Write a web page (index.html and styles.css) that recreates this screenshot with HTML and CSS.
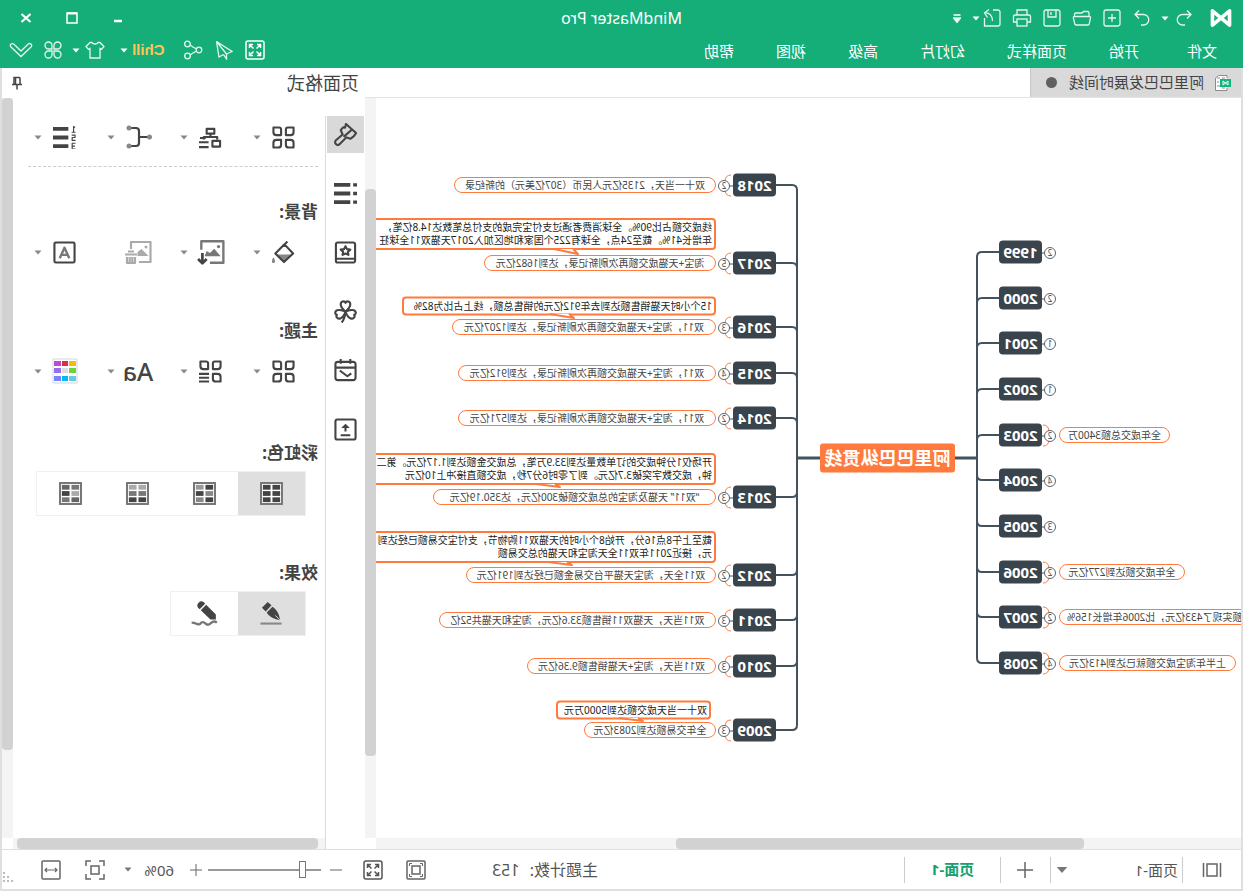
FILE: index.html
```html
<!DOCTYPE html>
<html lang="zh-CN">
<head>
<meta charset="utf-8">
<title>MindMaster Pro</title>
<link rel="stylesheet" href="styles.css">
</head>
<body>
<svg class="sprite" aria-hidden="true">
  <symbol id="caret" viewBox="0 0 8 5"><path d="M0.5 0.5h7L4 4.5z" fill="currentColor"/></symbol>
  <symbol id="grid4" viewBox="0 0 24 24"><g fill="none" stroke="currentColor" stroke-width="2.200"><path d="M1.5 1.5h6a2 2 0 0 1 2 2v6h-5a3 3 0 0 1-3-3zM22.500 1.500h-6a2 2 0 0 0-2 2v6h5a3 3 0 0 0 3-3zM1.500 22.500h5a3 3 0 0 0 3-3v-5h-5a3 3 0 0 0-3 3zM22.500 22.500h-5a3 3 0 0 1-3-3v-5h5a3 3 0 0 1 3 3z"/></g></symbol>
  <symbol id="expand" viewBox="0 0 20 20"><g fill="none" stroke="currentColor" stroke-width="1.500"><rect x="1" y="1" width="18" height="18" rx="2"/><path d="M4.500 8V4.500H8M12 4.500h3.500V8M15.500 12v3.500H12M8 15.500H4.500V12M4.500 4.500l4 4M15.500 4.500l-4 4M15.500 15.500l-4-4M4.500 15.500l4-4"/></g></symbol>
</svg>
<div class="app">
  <header class="header">
    <div class="titlebar">
      <div class="quick">
        <svg class="logo" viewBox="0 0 24 20"><path d="M2.500 2v16L21.500 2v16z" fill="none" stroke="#fff" stroke-width="4" stroke-linejoin="round"/></svg>
        <button class="tool" aria-label="撤销"><svg class="i20" viewBox="0 0 20 20"><path d="M7 2.500L3 6.500l4 4M3 6.500h8.500a5 5 0 0 1 0 10.500H9"/></svg></button>
        <button class="drop" aria-label="撤销历史"><svg class="caret"><use href="#caret"/></svg></button>
        <button class="tool redo" aria-label="重做"><svg class="i20" viewBox="0 0 20 20"><path d="M13 2.500l4 4-4 4M17 6.500H8.500a5 5 0 0 0 0 10.500H11"/></svg></button>
        <button class="tool" aria-label="新建"><svg class="i20" viewBox="0 0 20 20"><rect x="2" y="2" width="16" height="16" rx="2"/><path d="M10 6v8M6 10h8"/></svg></button>
        <button class="tool" aria-label="打开"><svg class="i20" viewBox="0 0 20 20"><path d="M3 8.500V5a1.500 1.500 0 0 1 1.500-1.500h4L10 5h6a1.500 1.500 0 0 1 1.500 1.500v2M2.500 8.500h15.200a1 1 0 0 1 1 1.200l-1.400 6a1.500 1.500 0 0 1-1.500 1.300H4.200a1.500 1.500 0 0 1-1.500-1.300l-1.200-6a1 1 0 0 1 1-1.200z"/></svg></button>
        <button class="tool" aria-label="保存"><svg class="i20" viewBox="0 0 20 20"><rect x="2" y="2" width="16" height="16" rx="2"/><path d="M6 2v7h8V2M11 4v3"/></svg></button>
        <button class="tool" aria-label="打印"><svg class="i20" viewBox="0 0 20 20"><path d="M5 7V2h10v5M5 14H1.500V8.500A1.500 1.500 0 0 1 3 7h14a1.500 1.500 0 0 1 1.500 1.500V14H15"/><rect x="5" y="11" width="10" height="7"/></svg></button>
        <button class="tool" aria-label="导出"><svg class="i20" viewBox="0 0 20 20"><path d="M9 2H4a2 2 0 0 0-2 2v12a2 2 0 0 0 2 2h13.500V10M13 1.500L17.500 5l-3 4.500M17.500 5c-5-.5-8 2.500-8 8"/></svg></button>
        <button class="drop near" aria-label="导出选项"><svg class="caret"><use href="#caret"/></svg></button>
        <button class="drop more" aria-label="自定义"><svg class="morei" viewBox="0 0 8 9"><path d="M0.500 1h7" stroke="#fff" stroke-width="1.500"/><path d="M0.500 4h7L4 8.500z" fill="#fff"/></svg></button>
      </div>
      <h1 class="title">MindMaster Pro</h1>
      <div class="window">
        <button aria-label="最小化"><svg viewBox="0 0 12 12"><path d="M2 9h8" stroke-width="2.500"/></svg></button>
        <button aria-label="最大化"><svg viewBox="0 0 12 12"><rect x="1" y="1" width="10" height="10" stroke-width="1.500"/><path d="M1 1.500h10" stroke-width="2"/></svg></button>
        <button aria-label="关闭"><svg viewBox="0 0 12 12"><path d="M1.500 2l9 8M10.500 2l-9 8" stroke-width="2.200"/></svg></button>
      </div>
    </div>
    <div class="menubar">
      <nav class="menu">
        <a class="file" href="#">文件</a><a href="#">开始</a><a href="#">页面样式</a><a href="#">幻灯片</a><a href="#">高级</a><a href="#">视图</a><a href="#">帮助</a>
      </nav>
      <div class="tools">
        <button class="tool" aria-label="全屏"><svg class="i20"><use href="#expand"/></svg></button>
        <button class="tool" aria-label="发送"><svg class="i20" viewBox="0 0 20 20"><path d="M17.500 1.500L2 11.500l5.500 2.500zM17.500 1.500L15 17l-4.500-2.500M17.500 1.500L7.500 14v5l3-4.500"/></svg></button>
        <button class="tool" aria-label="分享"><svg class="i20" viewBox="0 0 20 20"><circle cx="4" cy="10" r="2.800"/><circle cx="15.500" cy="4" r="2.800"/><circle cx="15.500" cy="16" r="2.800"/><path d="M6.500 9L10 7l3-2M6.500 11l3.500 2 3 2"/></svg></button>
        <button class="user">Chill<svg class="caret"><use href="#caret"/></svg></button>
        <button class="tool shirt" aria-label="皮肤"><svg class="i20" viewBox="0 0 20 20"><path d="M7 2.500c1 2 5 2 6 0h2l4 4-2.500 3L15 8.500V18H5V8.500L3.500 9.500 1 6.500l4-4z"/></svg></button>
        <button class="drop" aria-label="皮肤选项"><svg class="caret"><use href="#caret"/></svg></button>
        <button class="tool apps" aria-label="应用"><svg class="i20" viewBox="0 0 20 20"><path d="M9 9H5.500A3.500 3.500 0 1 1 9 5.500zM11 9V5.500A3.500 3.500 0 1 1 14.500 9zM9 11v3.500A3.500 3.500 0 1 1 5.500 11zM11 11h3.500a3.500 3.500 0 1 1-3.500 3.500z"/></svg></button>
        <button class="tool" aria-label="收起"><svg class="fold" viewBox="0 0 24 16"><path d="M3.500 1.500a2 2 0 0 0-1.500 3.500l10 9.500 10-9.500a2 2 0 0 0-3-2.800L12 9 5 2.200a2 2 0 0 0-1.500-.7z"/></svg></button>
      </div>
    </div>
  </header>

  <main class="workspace">
    <section class="document">
      <div class="tabs">
        <button class="tab">
          <svg class="docicon" viewBox="0 0 18 18"><path d="M5 4V1.500h8.500L16.500 4v12.500H5V14" fill="#fff" stroke="#8b8b8b"/><path d="M7 4h3M12 4h3M13 8h2M7 14h3M12 12h3" stroke="#8b8b8b"/><rect x="1" y="5" width="11" height="8" fill="#12b67d"/><path d="M4 11V7l5 4V7z" fill="none" stroke="#fff"/></svg>
          <span>阿里巴巴发展时间线</span><i class="dot"></i>
        </button>
      </div>
      <div class="canvas">
        <svg class="links" id="links"></svg>
        <div id="nodes"></div>
        <svg class="links" id="tails"></svg>
      </div>
      <div class="vscroll"><i></i></div>
      <div class="hscroll"><i></i></div>
    </section>

    <aside class="panel">
      <div class="panel-head"><h2>页面格式</h2><button class="pin" aria-label="固定"><svg viewBox="0 0 12 14"><path d="M3 1.500h6V8M3 1.500V8M1 8.500h10M6 9v4.500" fill="none" stroke="#444" stroke-width="1.500"/><path d="M7.500 2v6" stroke="#444" stroke-width="1.500"/></svg></button></div>
      <div class="rail">
        <button class="on" aria-label="格式"><svg viewBox="0 0 24 24"><path d="M11.500 1L1 10.500 3.500 14l3.500 2.500 4-1.500 7 7a2.800 2.800 0 0 0 4-4l-7-6 2-4.500-2.500-3-2 .5zM5.500 7l8.500 7.500"/></svg></button>
        <button aria-label="大纲"><svg viewBox="0 0 24 24"><path d="M7 3h17M7 12h17M7 21h17" stroke-width="4"/><path d="M0 3h4M0 12h4M0 21h4" stroke-width="3.500"/></svg></button>
        <button aria-label="图标"><svg viewBox="0 0 24 24"><rect x="2" y="1.500" width="20" height="21" rx="2"/><path d="M2 18.500h20M12 5.500l1.500 3 3.500.5-2.500 2.300.6 3.200-3.100-1.500-3.100 1.500.6-3.200L7 9l3.500-.5z"/></svg></button>
        <button aria-label="剪贴画"><svg viewBox="0 0 24 24"><path d="M12 12C8 9 7 7 7 4.500c0-3.500 4-4 5-1.500 1-2.500 5-2 5 1.500C17 7 16 9 12 12zM12 12c-3-1-5-2-7.500-1.500-4 .5-4 4.500-1.500 5-1.500 2 1 5 4 3.500 2.500-1 4-4 5-7zM12 12c3-1 5-2 7.500-1.500 4 .5 4 4.500 1.500 5 1.500 2-1 5-4 3.500-2.500-1-4-4-5-7zM12 12c.3 5 1.500 8.500 4 11.500"/></svg></button>
        <button aria-label="任务"><svg viewBox="0 0 24 24"><rect x="1.500" y="3" width="21" height="19" rx="2.500"/><path d="M1.500 9h21M7 0v5M17 0v5M18 12l-8 6-4-3"/></svg></button>
        <button aria-label="导出"><svg viewBox="0 0 24 24"><rect x="1.500" y="1.500" width="21" height="21" rx="2"/><path d="M12 14V8M7 18h10"/><path d="M7.500 10.500L12 6l4.500 4.500z" fill="currentColor" stroke="none"/></svg></button>
      </div>
      <div class="format">
        <section class="row first">
          <button aria-label="布局"><svg><use href="#grid4"/></svg></button><button class="drop" aria-label="布局选项"><svg class="caret"><use href="#caret"/></svg></button>
          <button aria-label="结构"><svg viewBox="0 0 24 24"><path d="M8 3h8v5H8zM12 8v3M5 14v-2.500h14V14M2 15.500h8v6H2z"/><path d="M14 17h10M14 22h10M17 12.500h6"/></svg></button><button class="drop" aria-label="结构选项"><svg class="caret"><use href="#caret"/></svg></button>
          <button aria-label="连接线"><svg viewBox="-2 0 28 24" class="wide"><path d="M2 12h8M20 3h-6a3 3 0 0 0-3 3v12a3 3 0 0 0 3 3h6"/><g fill="#888" stroke="none"><circle cx="0.500" cy="12" r="2.500"/><circle cx="21" cy="3" r="2.500"/><circle cx="21" cy="21" r="2.500"/></g></svg></button><button class="drop" aria-label="连接线选项"><svg class="caret"><use href="#caret"/></svg></button>
          <button aria-label="编号"><svg viewBox="0 0 24 24"><path d="M8 3h16M8 12h16M8 21h16" stroke-width="4"/><path d="M1 1.500l1.500-1V6.500M0.500 6.500h4M4.500 9.500H1V12h3v3H.5M.5 18h3.500v6H.5M1 21h3" stroke-width="1.200"/></svg></button><button class="drop" aria-label="编号选项"><svg class="caret"><use href="#caret"/></svg></button>
        </section>
        <section>
          <h3 class="near">背景:</h3>
          <div class="row">
            <button aria-label="背景颜色"><svg viewBox="0 0 24 24"><path d="M4 14h16l-8 8z" fill="#888" stroke="none"/><path d="M11 3.500l9.500 9.500-9 9L2 13zM8 .5l4.500 5"/><path d="M22.500 17c2.500 3.500 2 6 0 6s-2.500-2.500 0-6z" fill="#888" stroke="none"/></svg></button><button class="drop" aria-label="背景颜色选项"><svg class="caret"><use href="#caret"/></svg></button>
            <button aria-label="插入背景图"><svg viewBox="0 0 26 24" class="wide"><path d="M22 10V2H1.500v20H14" stroke="#777"/><path d="M4 16l6-7 4 4 3-2 2 5z" fill="#777" stroke="none"/><circle cx="6" cy="7" r="1.500" fill="#777" stroke="none"/><path d="M21 13v9M17 18.500l4 4 4-4" stroke-width="2.500"/></svg></button><button class="drop" aria-label="背景图选项"><svg class="caret"><use href="#caret"/></svg></button>
            <button aria-label="删除背景图" disabled><svg viewBox="0 0 28 24" class="wide faint"><path d="M21 9V2H1.500v20H13"/><path d="M3.500 16l7-7 4 3v4z" fill="currentColor" stroke="none"/><circle cx="6" cy="7" r="1.500" fill="currentColor" stroke="none"/><path d="M15 14.500h12M18 11.500h6M17 17v6h8v-6M19.700 17v5M22.300 17v5"/></svg></button><span></span>
            <button aria-label="水印"><svg viewBox="0 0 24 24"><rect x="1.500" y="1.500" width="21" height="21" rx="1.500"/><path d="M7 18l5-11 5 11M9 14.500h6" stroke="#777" stroke-width="2.500"/></svg></button><button class="drop" aria-label="水印选项"><svg class="caret"><use href="#caret"/></svg></button>
          </div>
        </section>
        <section>
          <h3 class="theme">主题:</h3>
          <div class="row">
            <button aria-label="主题"><svg><use href="#grid4"/></svg></button><button class="drop" aria-label="主题选项"><svg class="caret"><use href="#caret"/></svg></button>
            <button aria-label="主题样式"><svg viewBox="0 0 24 24"><path d="M1.500 1.500h6a2 2 0 0 1 2 2v6h-5a3 3 0 0 1-3-3zM22.500 1.500h-6a2 2 0 0 0-2 2v6h5a3 3 0 0 0 3-3zM1.500 22.500h5a3 3 0 0 0 3-3v-5h-5a3 3 0 0 0-3 3zM13.500 14.500H24M13.500 18.500H24M13.500 22.500H24"/></svg></button><button class="drop" aria-label="主题样式选项"><svg class="caret"><use href="#caret"/></svg></button>
            <button class="font" aria-label="字体">Aa</button><button class="drop" aria-label="字体选项"><svg class="caret"><use href="#caret"/></svg></button>
            <button aria-label="颜色"><svg viewBox="0 0 26 26" class="wide"><rect x="1" y="1" width="24" height="24" fill="#fff" stroke="#cdd6e8" stroke-width="1"/><g stroke="none"><path d="M2 3h7v5H2z" fill="#f0c000"/><path d="M10 3h6v5h-6z" fill="#dc2d50"/><path d="M17 3h7v5h-7z" fill="#c04bd0"/><path d="M2 10h7v5H2z" fill="#6fd040"/><path d="M10 10h6v5h-6z" fill="#dcdcdc"/><path d="M17 10h7v5h-7z" fill="#9470f0"/><path d="M2 18h7v5H2z" fill="#65cce0"/><path d="M10 18h6v5h-6z" fill="#00b8f5"/><path d="M17 18h7v5h-7z" fill="#7685ff"/></g></svg></button><button class="drop" aria-label="颜色选项"><svg class="caret"><use href="#caret"/></svg></button>
          </div>
        </section>
        <section>
          <h3>彩虹色:</h3>
          <div class="segment" id="rainbow"></div>
        </section>
        <section>
          <h3>效果:</h3>
          <div class="segment">
            <button class="on" aria-label="钢笔"><svg viewBox="0 0 24 24"><path d="M1.500 22.500h22" stroke="#888"/><path d="M12 3.500l4-3.500 6 6-4 4zM11 5l6 6c-3 5-8 7-14 8 .5-5 3-11 8-14z" fill="currentColor" stroke="none"/><path d="M3 19l5-5" stroke="#ddd" stroke-width="1"/></svg></button>
            <button aria-label="铅笔"><svg viewBox="0 0 26 24" class="wide"><path d="M1 20c2-1.500 3.500-1.500 5 0s3.500 3 5.500 1 3.500-2 5 0 3.500-1 8-1" stroke="#777"/><path d="M2 17v-4.500L11 3.500l5 5L7 17zM12 2.500c2-2.500 4-3 6-1s1.500 4-1 6z" fill="currentColor" stroke="none"/></svg></button>
          </div>
        </section>
      </div>
      <div class="vscroll"><i></i></div>
      <div class="hscroll"><i></i></div>
    </aside>
  </main>

  <footer class="status">
    <button class="pages" aria-label="页面列表"><svg viewBox="0 0 20 16"><path d="M5 2h10v12H5zM1.500 1v14M18.500 1v14"/></svg></button>
    <label class="pageselect"><select aria-label="当前页面"><option>页面-1</option></select><svg class="caret big"><use href="#caret"/></svg></label>
    <button class="add" aria-label="添加页面"><svg viewBox="0 0 16 16"><path d="M8 0v16M0 8h16"/></svg></button>
    <button class="pagetab">页面-1</button>
    <p class="count">主题计数: <span>153</span></p>
    <button aria-label="适合页面"><svg viewBox="0 0 20 20"><rect x="1" y="1" width="18" height="18" rx="1"/><rect x="6" y="6" width="8" height="8"/><path d="M3.500 6V3.500H6M14 3.500h2.500V6M16.500 14v2.500H14M6 16.500H3.500V14" stroke-width="1"/></svg></button>
    <button class="full" aria-label="全屏"><svg><use href="#expand"/></svg></button>
    <button class="step minus" aria-label="缩小"><svg viewBox="0 0 14 14"><path d="M1 7h12"/></svg></button>
    <input class="zoom" type="range" min="0" max="100" value="14" aria-label="缩放">
    <button class="step plus" aria-label="放大"><svg viewBox="0 0 14 14"><path d="M1 7h12M7 1v12"/></svg></button>
    <button class="percent">60%<svg class="caret"><use href="#caret"/></svg></button>
    <button aria-label="居中"><svg viewBox="0 0 20 20"><path d="M1 6V1h5M14 1h5v5M19 14v5h-5M6 19H1v-5M6 6h8v8H6z"/></svg></button>
    <button aria-label="适合宽度"><svg viewBox="0 0 20 20"><rect x="1" y="1" width="18" height="18" rx="1"/><path d="M4 10h12M6 8l-2 2 2 2M14 8l2 2-2 2" stroke-width="1.200"/></svg></button>
    <svg class="grip" viewBox="0 0 12 12"><path d="M10 1h2M10 5h2M6 5h2M10 9h2M6 9h2M2 9h2" stroke="#bbb" stroke-width="2"/></svg>
  </footer>
</div>
<script src="map.js"></script>
</body>
</html>
```
FILE: styles.css
```css
* { box-sizing: border-box; }
body {
  margin: 0;
  color: #444;
  font: 15px/20px "Noto Sans", "Noto Sans CJK SC", sans-serif;
}
button, select, input { font: inherit; color: inherit; }
button {
  display: flex;
  align-items: center;
  justify-content: center;
  padding: 0;
  border: 0;
  background: none;
}
h1, h2, h3, p { margin: 0; font-weight: 400; }
svg { display: block; flex: none; }
.sprite { position: absolute; width: 0; height: 0; }
.app {
  display: flex;
  flex-direction: column;
  min-height: 100vh;
  background: #fff;
  transform: scaleX(-1);
}
.caret { width: 8px; height: 5px; }
.drop { width: 8px; }

/* header */
.header { background: #15ae78; color: #fff; }
.header svg { fill: none; stroke: #e4f6ef; stroke-width: 1.3; }
.header .caret { stroke: none; color: #fff; }
.titlebar {
  display: grid;
  grid-template-columns: 1fr auto 1fr;
  align-items: center;
  height: 36px;
}
.quick { display: flex; align-items: center; padding-left: 11px; }
.header .logo { width: 22px; height: 18px; margin-right: 11px; }
.tool { width: 30px; height: 30px; }
.i20 { width: 20px; height: 20px; }
.redo { margin-left: 4px; }
.quick .near { margin-left: -3px; }
.quick .more { margin-left: 11px; }
.morei { width: 8px; height: 9px; }
.title { font-size: 16px; line-height: 24px; }
.window { display: flex; justify-content: flex-end; padding-right: 3px; }
.window button { width: 46px; height: 30px; }
.header .window svg { width: 12px; height: 12px; stroke: #fff; }
.menubar {
  display: flex;
  align-items: center;
  justify-content: space-between;
  height: 32px;
  padding: 0 6px 4px 26px;
}
.menu { display: flex; gap: 42px; padding-top: 2px; }
.menu a { color: #fff; text-decoration: none; }
.menu .file { margin-right: 6px; }
.tools { display: flex; align-items: center; }
.tools .tool { margin-left: 1px; }
.tools .shirt { margin-left: 10px; }
.tools .apps { margin: 0 1px 0 4px; }
.user {
  gap: 4px;
  margin-left: 14px;
  color: #ffc35c;
  font: bold 15px/20px "Liberation Sans", sans-serif;
}
.fold { width: 24px; height: 16px; }

/* workspace */
.workspace {
  display: flex;
  flex: 1;
  border: solid #dfdfdf;
  border-width: 0 2px;
}
.document {
  display: grid;
  flex: 1;
  grid-template: 30px 1fr 11px / 1fr 11px;
  min-width: 0;
}
.tabs { grid-column: 1 / 3; display: flex; border-bottom: 1px solid #e3e3e3; }
.tab {
  gap: 10px;
  padding: 0 15px 0 9px;
  background: #d9d9d9;
  border-right: 1px solid #c8c8c8;
}
.tab span { padding-bottom: 2px; }
.docicon { width: 18px; height: 18px; }
.dot { width: 11px; height: 11px; margin-left: 2px; border-radius: 50%; background: #606060; }
.vscroll, .hscroll { display: grid; background: #f4f4f4; }
.vscroll i, .hscroll i { background: #d2d2d2; border-radius: 4px; }
.document .vscroll { grid-template-rows: 91fr 567fr 82fr; }
.document .vscroll i { grid-row: 2; }
.document .hscroll { grid-template-columns: 157fr 408fr 300fr; }
.document .hscroll i { grid-column: 2; }

/* mind map */
.canvas { position: relative; overflow: hidden; }
.links { position: absolute; top: 0; left: 0; width: 100%; height: 100%; fill: none; stroke-width: 2; }
#links path { stroke: #44525c; }
#links .trunk { stroke-width: 3; }
#links .stub { stroke-width: 1; }
#links .brace, #tails path { stroke: #ff7a3c; }
#links .brace { stroke-width: 1; }
#tails path { fill: #fff; stroke-width: 2; stroke-linejoin: round; }
.root, .year, .num, .pill, .note {
  position: absolute;
  display: flex;
  align-items: center;
  justify-content: center;
  transform: translateY(-50%);
  white-space: nowrap;
}
.root {
  width: 135px;
  height: 29px;
  padding-bottom: 2px;
  border-radius: 3px;
  background: #ff7a3c;
  color: #fff;
  font-size: 18px;
  font-weight: 700;
}
.year {
  width: 43px;
  height: 23px;
  padding-bottom: 2px;
  border-radius: 4px;
  background: #39444d;
  color: #fff;
  font: 700 15px/20px "Open Sans", sans-serif;
}
.num {
  width: 12px;
  height: 12px;
  border: 1px solid #5a6670;
  border-radius: 50%;
  background: #fff;
  font-size: 8px;
  line-height: 10px;
}
.pill {
  height: 16px;
  border: 1px solid #ff7a3c;
  border-radius: 8px;
  background: #fff;
  font-size: 10px;
  line-height: 13px;
}
.pill.cut { justify-content: flex-end; padding-right: 7px; }
.note {
  flex-direction: column;
  align-items: flex-start;
  padding: 1px 2px;
  border: 2px solid #ff7a3c;
  border-radius: 4px;
  background: #fff;
  color: #222;
  font-size: 10px;
  line-height: 13px;
}

/* format panel */
.panel {
  display: grid;
  flex: none;
  grid-template: 30px 1fr 11px / 40px minmax(0, 1fr) 11px;
  width: 363px;
}
.panel-head {
  grid-column: 1 / 4;
  display: flex;
  align-items: center;
  justify-content: space-between;
  padding: 0 9px 0 6px;
}
.panel-head h2 { font-size: 18px; line-height: 24px; }
.pin svg { width: 12px; height: 14px; }
.rail {
  grid-row: 2 / 4;
  display: flex;
  flex-direction: column;
  gap: 22px;
  margin-top: 18px;
  padding-left: 1px;
  border-right: 1px solid #dcdcdc;
}
.rail button { width: 37px; height: 37px; }
.rail .on, .segment .on { background: #d9d9d9; }
.panel svg:not(.caret) { stroke-width: 2.2; }
.rail svg, .format svg { fill: none; stroke: currentColor; width: 23px; height: 23px; stroke-linejoin: round; }
.format { padding: 14px 8px 0 7px; }
.row { display: grid; grid-template-columns: repeat(4, 34px 39px); padding-left: 17px; margin-right: -20px; height: 50px; }
.row .drop { margin-left: 6px; }
.row .caret { width: 8px; height: 5px; color: #888; stroke: none; }
.row .wide, .segment .wide { width: 28px; height: 26px; }
.format .first { height: 55px; margin-right: 7px; padding-bottom: 4px; border-bottom: 1px dashed #ccc; }
.faint { color: #aaa; }
.font { font: 500 25px/30px "Noto Sans", sans-serif; }
.format h3 { margin: 46px 0 7px; font-size: 17px; line-height: 22px; font-weight: 700; }
.format h3.near { margin: 34px 0 4px; }
.format h3.theme { margin: 43px 0 4px; }
.segment { display: flex; width: fit-content; margin-left: 12px; border: 1px solid #f0f0f0; }
.segment button { width: 67px; height: 43px; }
.segment .on { background: #dfdfdf; }
.panel .vscroll { grid-template-rows: 652fr 88fr; }
.panel .hscroll { grid-column: 2; padding: 0 4px 0 7px; }

/* status bar */
.status {
  display: flex;
  align-items: center;
  height: 42px;
  border: solid #dfdfdf;
  border-width: 1px 2px 2px;
  color: #555;
}
.status svg { width: 20px; height: 20px; fill: none; stroke: #666; stroke-width: 1.5; }
.status .caret { width: 8px; height: 5px; stroke: none; color: #777; }
.status .caret.big { width: 12px; height: 8px; }
.status button { width: 30px; height: 26px; margin-left: 14px; }
.status .pages, .status .add, .status .pagetab { margin: 0; border-right: 1px solid #ccc; }
.status .pages { width: 59px; }
.status .add { width: 50px; }
.status .add svg { width: 16px; height: 16px; }
.status .pagetab { width: 96px; padding-bottom: 2px; color: #15a070; font-weight: 700; }
.pageselect {
  display: flex;
  align-items: center;
  justify-content: space-between;
  width: 132px;
  height: 26px;
  padding: 0 5px 0 4px;
  border-right: 1px solid #ccc;
}
.pageselect select { appearance: none; flex: 1; padding: 0; border: 0; background: none; }
.count { margin: 0 47px 0 auto; font-size: 16px; }
.count span { margin-left: 6px; }
.status .step { width: 16px; }
.status .step svg { width: 14px; height: 14px; stroke-width: 1; }
.status .plus { margin-left: 4px; }
.zoom { appearance: none; width: 113px; height: 20px; margin: 0 0 0 7px; background: none; }
.zoom::-webkit-slider-runnable-track { height: 2px; background: #999; }
.zoom::-webkit-slider-thumb {
  appearance: none;
  width: 7px;
  height: 17px;
  margin-top: -8px;
  border: 1px solid #777;
  background: #fff;
}
.status .percent { width: 50px; justify-content: space-between; }
.status .full { margin-left: 13px; }
.status .grip { width: 12px; height: 12px; margin: 16px 1px 0 21px; }
```
FILE: map.js
```js
const SPINE_LEFT = 264, SPINE_RIGHT = 444, ROOT_Y = 360;

const left = [
  { year: 1999, y: 154, n: 2 }, { year: 2000, y: 200, n: 2 },
  { year: 2001, y: 245, n: 1 }, { year: 2002, y: 291, n: 1 },
  { year: 2003, y: 337, n: 2, w: 111, text: "全年成交总额3400万" },
  { year: 2004, y: 382, n: 4 }, { year: 2005, y: 428, n: 3 },
  { year: 2006, y: 474, n: 2, w: 126, text: "全年成交额达到277亿元" },
  { year: 2007, y: 519, n: 2, w: 230, cut: true, text: "额实现了433亿元，比2006年增长156%" },
  { year: 2008, y: 565, n: 4, w: 177, text: "上半年淘宝成交额就已达到413亿元" }
];

const right = [
  { year: 2018, y: 87, n: 2, w: 262, text: "双十一当天，2135亿元人民币（307亿美元）的新纪录" },
  { year: 2017, y: 165, n: 5, w: 232, text: "淘宝+天猫成交额再次刷新记录，达到1682亿元",
    note: { x: 525, y: 136, w: 420, tip: [663, 157], lines: ["线成交额占比90%。全球消费者通过支付宝完成的支付总笔数达14.8亿笔，", "年增长41%。截至24点，全球有225个国家和地区加入2017天猫双11全球狂"] } },
  { year: 2016, y: 229, n: 3, w: 264, text: "双11，淘宝+天猫成交额再次刷新记录，达到1207亿元",
    note: { x: 525, y: 208, w: 314, tip: [667, 221], lines: ["15个小时天猫销售额达到去年912亿元的销售总额，线上占比为82%"] } },
  { year: 2015, y: 275, n: 4, w: 258, text: "双11，淘宝+天猫成交额再次刷新记录，达到912亿元" },
  { year: 2014, y: 320, n: 2, w: 258, text: "双11，淘宝+天猫成交额再次刷新记录，达到571亿元" },
  { year: 2013, y: 399, n: 3, w: 283, text: "“双11” 天猫及淘宝的总成交额破300亿元，达350.19亿元",
    note: { x: 525, y: 371, w: 420, tip: [681, 390], lines: ["开场仅1分钟成交的订单数量达到33.9万笔，总成交金额达到1.17亿元。第二", "钟，成交数字突破3.7亿元。到了零时6分7秒，成交额直接冲上10亿元"] } },
  { year: 2012, y: 477, n: 2, w: 250, text: "双11全天，淘宝天猫平台交易金额已经达到191亿元",
    note: { x: 525, y: 449, w: 420, tip: [669, 468], lines: ["截至上午8点16分，开始8个小时的天猫双11购物节，支付宝交易额已经达到", "元，接近2011年双11全天淘宝和天猫的总交易额"] } },
  { year: 2011, y: 522, n: 3, w: 277, text: "双11当天，天猫双11销售额33.6亿元，淘宝和天猫共52亿" },
  { year: 2010, y: 568, n: 3, w: 189, text: "双11当天，淘宝+天猫销售额9.36亿元" },
  { year: 2009, y: 632, n: 3, w: 132, text: "全年交易额达到2083亿元",
    note: { x: 530, y: 612, w: 155, tip: [598, 624], lines: ["双十一当天成交额达到5000万元"] } }
];

const nodes = document.getElementById("nodes");
let links = "", tails = "";

function add(cls, x, y, text, w) {
  const el = document.createElement("div");
  el.className = cls;
  el.style.left = x + "px";
  el.style.top = y + "px";
  if (w) el.style.width = w + "px";
  for (const line of [].concat(text)) {
    const span = document.createElement("span");
    span.textContent = line;
    el.append(span);
  }
  nodes.append(el);
}

function link(d, cls = "") {
  links += `<path class="${cls}" d="${d}"/>`;
}

function branch(item, side) {
  const { y } = item;
  const spine = side < 0 ? SPINE_LEFT : SPINE_RIGHT;
  const bend = y < ROOT_Y ? 5 : -5;
  const edge = side < 0 ? 199 : 508;
  const numX = side < 0 ? 191 : 517;
  link(`M${spine} ${y + bend}q0 ${-bend} ${side * 5} ${-bend}H${side < 0 ? 242 : 466}`);
  link(`M${edge} ${y + 1}h${side * 4}`, "stub");
  if (item.text) {
    link(`M${numX - side * 7} ${y - 10}q${side * 6} 0 ${side * 6} 7M${numX - side * 7} ${y + 11}q${side * 6} 0 ${side * 6} -7`, "brace");
    add(item.cut ? "pill cut" : "pill", side < 0 ? 182 - item.w : 525, y, item.text, item.w);
  }
  add("year", side < 0 ? 199 : 465, y, item.year);
  add("num", numX - 6, y + 1, item.n);
  if (item.note) {
    const { x, y: ny, w, tip, lines } = item.note;
    add("note", x, ny, lines, w);
    const base = ny + (lines.length > 1 ? 15 : 8);
    tails += `<path d="M${tip[0] + 5} ${base}L${tip[0]} ${tip[1] - 1}L${tip[0] + 24} ${base}"/>`;
  }
}

link(`M${SPINE_LEFT} ${ROOT_Y}H${SPINE_RIGHT}`, "trunk");
link(`M${SPINE_LEFT} 159V560`);
link(`M${SPINE_RIGHT} 92V627`);
left.forEach(item => branch(item, -1));
right.forEach(item => branch(item, 1));
add("root", 286, ROOT_Y, "阿里巴巴纵贯线");

document.getElementById("links").innerHTML = links;
document.getElementById("tails").innerHTML = tails;

const shades = [
  ["#444", "#444", "#444", "#444", "#444", "#444"],
  ["#444", "#999", "#888", "#444", "#444", "#888"],
  ["#aaa", "#aaa", "#777", "#777", "#444", "#444"],
  ["#777", "#666", "#aaa", "#444", "#666", "#777"]
];
const names = ["彩虹色一", "彩虹色二", "彩虹色三", "彩虹色四"];
document.getElementById("rainbow").innerHTML = shades.map((set, i) => {
  const cells = set.map((c, k) =>
    `<rect x="${k % 2 ? 13 : 3}" y="${3 + 6.500 * (k >> 1)}" width="8" height="5" fill="${c}" stroke="none"/>`).join("");
  return `<button class="${i ? "" : "on"}" aria-label="${names[i]}"><svg viewBox="0 0 24 24"><rect x="1" y="1" width="22" height="22" fill="#fff" stroke="#777"/>${cells}</svg></button>`;
}).join("");
```
